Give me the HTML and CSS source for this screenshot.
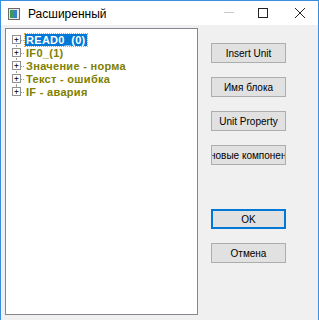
FILE: index.html
```html
<!DOCTYPE html>
<html lang="ru">

<head>
    <meta charset="UTF-8">
    <title>Расширенный</title>
    <link rel="stylesheet" href="styles.css">
</head>

<body>
    <div class="window">
        <div class="titlebar">
            <svg class="app-icon" width="12" height="12" viewBox="0 0 12 12">
                <rect x="0.5" y="0.5" width="11" height="11" fill="#e8e8e8" stroke="#6b6b6b" />
                <rect x="2" y="2" width="4" height="8" fill="#3a9a5a" />
                <rect x="6" y="2" width="3" height="8" fill="#3d7fc4" />
            </svg>
            <span class="title">Расширенный</span>
            <div class="controls">
                <svg class="ctl" width="32" height="24" viewBox="0 0 32 24">
                    <line x1="12" y1="11.5" x2="22" y2="11.5" stroke="#c8c8c8" stroke-width="1" />
                </svg>
                <svg class="ctl" width="36" height="24" viewBox="0 0 36 24">
                    <rect x="14.5" y="7.5" width="9" height="9" fill="none" stroke="#222" stroke-width="1" />
                </svg>
                <svg class="ctl" width="38" height="24" viewBox="0 0 38 24">
                    <path d="M15 7 L25 17 M25 7 L15 17" stroke="#222" stroke-width="1" />
                </svg>
            </div>
        </div>

        <div class="client">
            <div class="tree">
                <div class="node">
                    <span class="expander">+</span>
                    <span class="label selected">READ0_(0)</span>
                </div>
                <div class="node">
                    <span class="expander">+</span>
                    <span class="label">IF0_(1)</span>
                </div>
                <div class="node">
                    <span class="expander">+</span>
                    <span class="label">Значение - норма</span>
                </div>
                <div class="node">
                    <span class="expander">+</span>
                    <span class="label">Текст - ошибка</span>
                </div>
                <div class="node last">
                    <span class="expander">+</span>
                    <span class="label">IF - авария</span>
                </div>
            </div>

            <div class="buttons">
                <button class="btn">Insert Unit</button>
                <button class="btn">Имя блока</button>
                <button class="btn">Unit Property</button>
                <button class="btn clip">новые компонен</button>
                <button class="btn default">OK</button>
                <button class="btn">Отмена</button>
            </div>
        </div>
    </div>
</body>

</html>
```

FILE: styles.css
```css
body {
    margin: 0;
    background-color: #f0f0f0;
    font-family: "Liberation Sans", Arial, sans-serif;
}

.window {
    width: 317px;
    height: 319px;
    border: 1px solid #3a8ee0;
    background-color: #f0f0f0;
    display: flex;
    flex-direction: column;
}

.titlebar {
    height: 24px;
    background-color: #fff;
    display: flex;
    align-items: center;
}

.app-icon {
    margin-left: 7px;
    margin-top: 2px;
}

.title {
    margin-left: 8px;
    font-family: "Liberation Sans", Arial, sans-serif;
    font-size: 12px;
    color: #000;
    margin-top: 1px;
}

.controls {
    margin-left: auto;
    display: flex;
}

.ctl {
    display: block;
}

.client {
    flex: 1;
    display: flex;
    padding: 3px 0 0 4px;
}

.tree {
    width: 191px;
    height: 281px;
    border: 1px solid #828790;
    background-color: #fff;
    padding-top: 4px;
}

.node {
    height: 13px;
    display: flex;
    align-items: center;
    position: relative;
}

.node::before {
    content: "";
    position: absolute;
    left: 10px;
    top: 0;
    height: 13px;
    border-left: 1px dotted #a0a0a0;
}

.node:first-child::before {
    top: 6px;
    height: 7px;
}

.node.last::before {
    height: 6px;
}

.expander {
    position: relative;
    z-index: 1;
    margin-left: 6px;
    width: 7px;
    height: 7px;
    border: 1px solid #919191;
    background-color: #fff;
    font-size: 8px;
    line-height: 7px;
    text-align: center;
    color: #000;
    font-family: "DejaVu Sans Mono", monospace;
}

.label {
    margin-left: 4px;
    font-family: "Liberation Sans", Arial, sans-serif;
    font-weight: bold;
    font-size: 11px;
    letter-spacing: 0.3px;
    color: #808000;
    line-height: 12px;
    padding: 0 1px;
    position: relative;
}

.label::after {
    content: "";
    position: absolute;
    left: -4px;
    top: 6px;
    width: 3px;
    border-top: 1px dotted #a0a0a0;
}

.selected {
    background-color: #0078d7;
    color: #fff;
    outline: 1px dotted #e5a03a;
}

.buttons {
    display: flex;
    flex-direction: column;
    margin-left: 13px;
    padding-top: 15px;
}

.btn {
    width: 75px;
    height: 20px;
    margin-bottom: 14px;
    padding: 0;
    background-color: #e1e1e1;
    border: 1px solid #adadad;
    font-family: "Liberation Sans", Arial, sans-serif;
    font-size: 10px;
    color: #000;
    white-space: nowrap;
    overflow: hidden;
}

.btn.clip {
    text-indent: -2px;
    margin-bottom: 44px;
}

.btn.default {
    border: 1px solid #0078d7;
    box-shadow: inset 0 0 0 1px #0078d7;
}
```
